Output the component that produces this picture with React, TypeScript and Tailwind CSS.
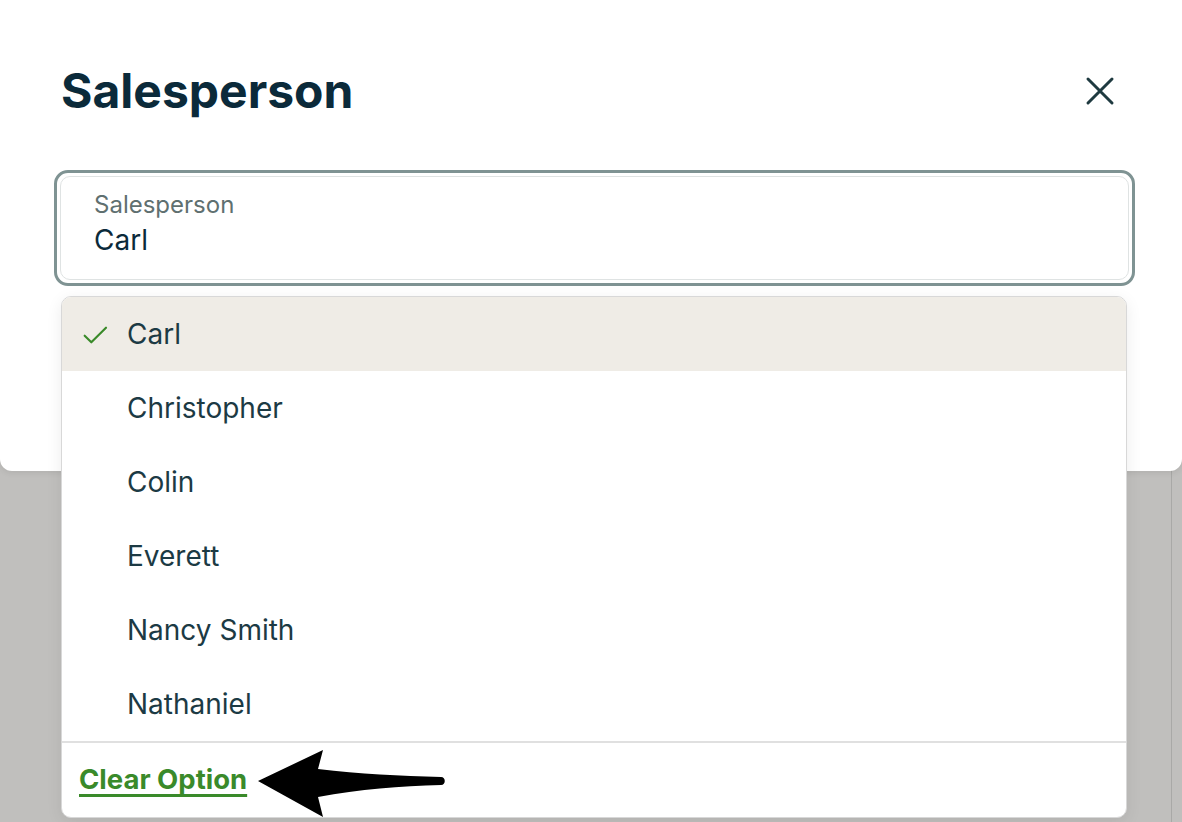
import React from "react";

const options = ["Carl", "Christopher", "Colin", "Everett", "Nancy Smith", "Nathaniel"];

export default function App() {
  return (
    <div
      className="relative h-[822px] w-[1182px] overflow-hidden bg-[#c0bfbd]"
      style={{ fontFamily: "Inter, 'Noto Sans', sans-serif" }}
    >
      <div className="absolute inset-0 flex">
        <div className="w-[1172px] border-r border-[#a9a9a7]" />
      </div>
      <div className="relative h-[471px] rounded-b-[12px] bg-white shadow-[0_2px_6px_rgba(0,0,0,0.08)]">
        <div className="flex items-start justify-between pl-[61px] pr-[66px] pt-[62px]">
          <h1 className="text-[48px] font-bold leading-[58px] text-[#0b2a3a]">Salesperson</h1>
          <svg width="32" height="32" viewBox="0 0 32 32" className="mt-[13px]">
            <path d="M4 4 L28 28 M28 4 L4 28" stroke="#1f3a40" strokeWidth="3" strokeLinecap="round" />
          </svg>
        </div>
        <div className="relative ml-[54px] mr-[47px] mt-[50px]">
          <div className="h-[116px] rounded-[14px] border-[3px] border-[#7f9393] p-[3px]">
            <div className="flex h-full flex-col rounded-[10px] border border-[#dfe3e3] px-[33px] pt-[12px]">
              <span className="text-[24px] leading-[32px] text-[#5f7070]">Salesperson</span>
              <span className="mt-[1px] text-[28px] leading-[36px] text-[#0b2a3a]">Carl</span>
            </div>
          </div>
          <div className="absolute left-[7px] right-[8px] top-[126px] overflow-hidden rounded-[10px] border border-[#d8d8d8] bg-white shadow-[0_4px_16px_rgba(0,0,0,0.08)]">
            {options.map((o, i) => (
              <div
                key={o}
                className={`flex h-[74px] items-center ${i === 0 ? "bg-[#efece6]" : "bg-white"}`}
              >
                <div className="flex w-[65px] justify-center pl-[2px]">
                  {i === 0 && (
                    <svg width="32" height="32" viewBox="0 0 24 24" className="mt-[2px]">
                      <path d="M3.5 12.5 L8.5 17.5 L19.5 6.5" fill="none" stroke="#3a8a2a" strokeWidth="1.6" strokeLinecap="round" strokeLinejoin="round" />
                    </svg>
                  )}
                </div>
                <span className="text-[28px] text-[#1c3a44]">{o}</span>
              </div>
            ))}
            <div className="flex h-[76px] items-center border-t-2 border-[#e0e0e0] pl-[17px]">
              <span className="text-[27.5px] font-bold text-[#3a8a2a] underline decoration-[3px] underline-offset-[5px]">
                Clear Option
              </span>
            </div>
          </div>
        </div>
      </div>
      <svg className="absolute left-[250px] top-[745px]" width="200" height="75" viewBox="250 745 200 75">
        <path
          d="M258 781 L323 750 L318 769 C360 774 400 776 441 777 C446 777 446 785 441 785 C400 786 360 789 318 797 L323 817 Z"
          fill="#000"
        />
      </svg>
    </div>
  );
}
